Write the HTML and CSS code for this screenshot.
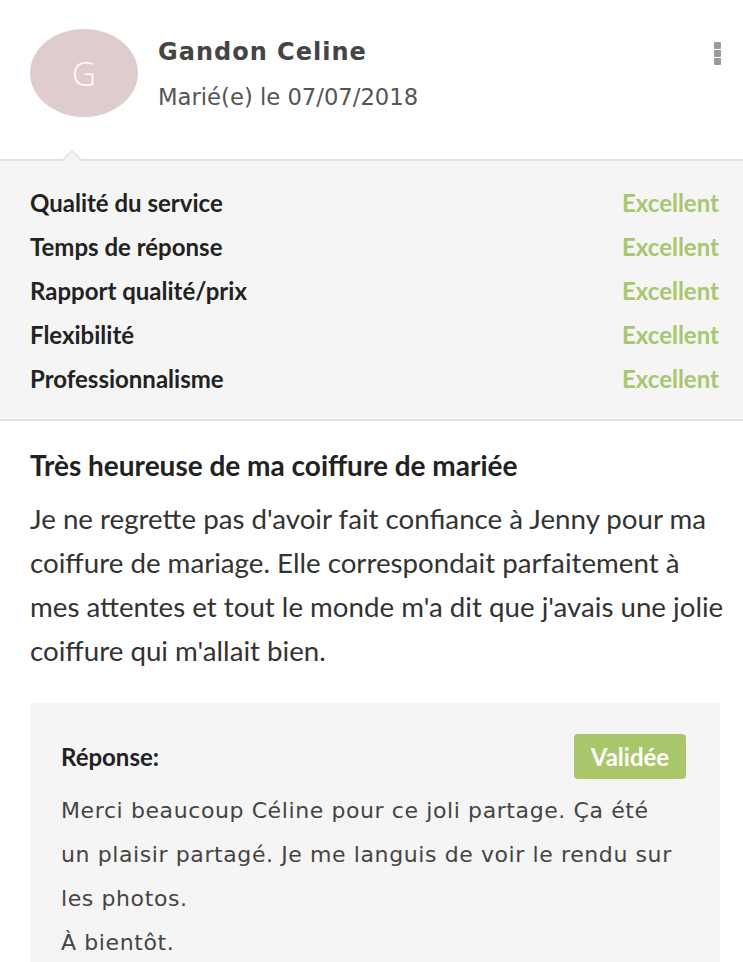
FILE: index.html
```html
<!DOCTYPE html>
<html lang="fr">
<head>
<meta charset="utf-8">
<title>Avis</title>
<link rel="stylesheet" href="styles.css">
</head>
<body>
<div class="review">
  <header class="head">
    <div class="avatar">G</div>
    <div class="who">
      <div class="name">Gandon Celine</div>
      <div class="date">Marié(e) le 07/07/2018</div>
    </div>
    <div class="kebab"><span></span><span></span><span></span></div>
  </header>
  <section class="ratings">
    <div class="row"><span class="label">Qualité du service</span><span class="val">Excellent</span></div>
    <div class="row"><span class="label">Temps de réponse</span><span class="val">Excellent</span></div>
    <div class="row"><span class="label">Rapport qualité/prix</span><span class="val">Excellent</span></div>
    <div class="row"><span class="label">Flexibilité</span><span class="val">Excellent</span></div>
    <div class="row"><span class="label">Professionnalisme</span><span class="val">Excellent</span></div>
  </section>
  <section class="body">
    <h2 class="title">Très heureuse de ma coiffure de mariée</h2>
    <p class="text">Je ne regrette pas d'avoir fait confiance à Jenny pour ma coiffure de mariage. Elle correspondait parfaitement à mes attentes et tout le monde m'a dit que j'avais une jolie coiffure qui m'allait bien.</p>
    <div class="reply">
      <div class="reply-head">
        <span class="reply-label">Réponse:</span>
        <span class="badge">Validée</span>
      </div>
      <p class="reply-text">Merci beaucoup Céline pour ce joli partage. Ça été un plaisir partagé. Je me languis de voir le rendu sur les photos.<br>À bientôt.</p>
    </div>
  </section>
</div>
</body>
</html>
```
FILE: styles.css
```css
* { box-sizing: border-box; }
html, body { margin: 0; padding: 0; background: #fff; }
body { font-family: Lato, "Open Sans", sans-serif; color: #222; }

.review { width: 743px; }

.head {
  display: flex;
  align-items: flex-start;
  padding: 29px 22px 0 30px;
  height: 161px;
  position: relative;
  border-bottom: 2px solid #e2e2e2;
}
.head::before {
  content: "";
  position: absolute;
  left: 61px;
  bottom: -2px;
  width: 0; height: 0;
  border-left: 11px solid transparent;
  border-right: 11px solid transparent;
  border-bottom: 11px solid #e2e2e2;
}
.head::after {
  content: "";
  position: absolute;
  left: 63px;
  bottom: -2px;
  width: 0; height: 0;
  border-left: 9px solid transparent;
  border-right: 9px solid transparent;
  border-bottom: 9px solid #f5f5f5;
}
.avatar {
  width: 108px;
  height: 88px;
  border-radius: 50%;
  background: #dfcccd;
  color: #fff;
  font-family: "Open Sans", sans-serif;
  font-weight: 300;
  font-size: 33px;
  display: flex;
  align-items: center;
  justify-content: center;
  flex: none;
}
.who { flex: 1; padding-left: 20px; padding-top: 6px; }
.name {
  font-family: "DejaVu Sans", sans-serif;
  font-weight: 700;
  font-size: 24px;
  letter-spacing: 1px;
  color: #444;
  line-height: 34px;
}
.date {
  font-family: "DejaVu Sans", sans-serif;
  font-size: 22.7px;
  color: #555;
  margin-top: 14px;
  line-height: 28px;
}
.kebab {
  display: flex;
  flex-direction: column;
  gap: 1px;
  margin-top: 13px;
}
.kebab span {
  width: 7px;
  height: 7px;
  background: #9a9a9a;
  border-radius: 1px;
}

.ratings {
  background: #f5f5f5;
  border-bottom: 2px solid #e2e2e2;
  padding: 19px 24px 19px 30px;
}
.row {
  display: flex;
  justify-content: space-between;
  align-items: center;
  height: 44px;
  font-size: 24px;
}
.label { font-weight: 700; color: #222; }
.val { font-weight: 700; color: #a9c76f; }

.body { padding: 27px 8px 0 30px; }
.title {
  margin: 0;
  font-size: 28px;
  font-weight: 700;
  color: #222;
  line-height: 34px;
}
.text {
  margin: 15px 0 0;
  font-size: 27.7px;
  line-height: 44px;
  color: #333;
}
.reply {
  margin-top: 30px;
  background: #f5f5f5;
  padding: 31px 34px 10px 31px;
  width: 690px;
}
.reply-head {
  display: flex;
  justify-content: space-between;
  align-items: center;
}
.reply-label { font-weight: 700; font-size: 24px; color: #222; }
.badge {
  background: #a9c76a;
  color: #fff;
  font-weight: 700;
  font-size: 24px;
  border-radius: 4px;
  width: 112px;
  height: 45px;
  display: flex;
  align-items: center;
  justify-content: center;
}
.reply-text {
  margin: 10px 4px 0 0;
  font-family: "DejaVu Sans", sans-serif;
  font-size: 22px;
  letter-spacing: 0.6px;
  line-height: 44px;
  color: #444;
}
```
